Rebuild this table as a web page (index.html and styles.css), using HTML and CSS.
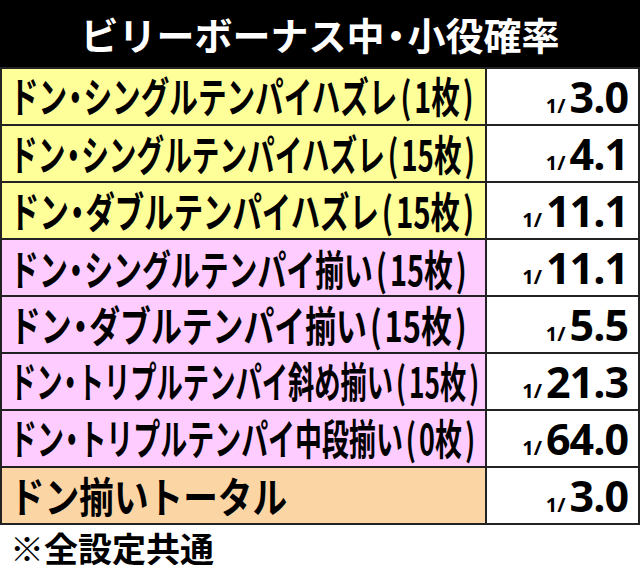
FILE: index.html
```html
<!DOCTYPE html>
<html lang="ja">
<head>
<meta charset="utf-8">
<link rel="stylesheet" href="styles.css">
</head>
<body>
<div class="page">
  <div class="title">ビリーボーナス中<span class="dot">・</span>小役確率</div>
  <table class="odds">
    <colgroup><col class="c-name"><col class="c-val"></colgroup>
    <tr class="yellow"><td class="name"><span class="lbl" style="--sx:.681">ドン<span class="dot">・</span>シングルテンパイハズレ<span class="po">(</span>1枚<span class="pc">)</span></span></td><td class="val"><span class="pre">1/</span><span class="num">3.0</span></td></tr>
    <tr class="yellow"><td class="name"><span class="lbl" style="--sx:.659">ドン<span class="dot">・</span>シングルテンパイハズレ<span class="po">(</span>15枚<span class="pc">)</span></span></td><td class="val"><span class="pre">1/</span><span class="num">4.1</span></td></tr>
    <tr class="yellow"><td class="name"><span class="lbl" style="--sx:.70">ドン<span class="dot">・</span>ダブルテンパイハズレ<span class="po">(</span>15枚<span class="pc">)</span></span></td><td class="val"><span class="pre">1/</span><span class="num">11.1</span></td></tr>
    <tr class="pink"><td class="name"><span class="lbl" style="--sx:.688">ドン<span class="dot">・</span>シングルテンパイ揃い<span class="po">(</span>15枚<span class="pc">)</span></span></td><td class="val"><span class="pre">1/</span><span class="num">11.1</span></td></tr>
    <tr class="pink"><td class="name"><span class="lbl" style="--sx:.735">ドン<span class="dot">・</span>ダブルテンパイ揃い<span class="po">(</span>15枚<span class="pc">)</span></span></td><td class="val"><span class="pre">1/</span><span class="num">5.5</span></td></tr>
    <tr class="pink"><td class="name"><span class="lbl" style="--sx:.626">ドン<span class="dot">・</span>トリプルテンパイ斜め揃い<span class="po">(</span>15枚<span class="pc">)</span></span></td><td class="val"><span class="pre">1/</span><span class="num">21.3</span></td></tr>
    <tr class="pink"><td class="name"><span class="lbl" style="--sx:.642">ドン<span class="dot">・</span>トリプルテンパイ中段揃い<span class="po">(</span>0枚<span class="pc">)</span></span></td><td class="val"><span class="pre">1/</span><span class="num">64.0</span></td></tr>
    <tr class="peach"><td class="name"><span class="lbl" style="--sx:.825">ドン揃いトータル</span></td><td class="val"><span class="pre">1/</span><span class="num">3.0</span></td></tr>
  </table>
  <div class="note">※全設定共通</div>
</div>
</body>
</html>
```

FILE: styles.css
```css
html, body {
  margin: 0;
  padding: 0;
  background: #ffffff;
}

.page {
  width: 640px;
  font-family: "Noto Sans CJK JP", "Noto Sans", sans-serif;
  color: #000;
}

.title {
  background: #000;
  color: #fff;
  height: 67px;
  display: flex;
  align-items: center;
  justify-content: center;
  font-size: 38px;
  font-weight: 700;
  line-height: 1;
}

.dot {
  font-feature-settings: "palt";
}

.title .dot {
  margin: 0 2px;
}

.odds {
  border-collapse: collapse;
  table-layout: fixed;
  width: 640px;
}

.c-name { width: 485px; }

.odds td {
  border: 2px solid #222;
  height: 55px;
  padding: 0;
  white-space: nowrap;
  line-height: 1;
  vertical-align: middle;
}

.yellow .name { background: #ffff99; }
.pink .name { background: #ffccff; }
.peach .name { background: #fcd5a5; }

.odds .name { padding-left: 8px; }

.lbl {
  display: inline-block;
  font-size: calc(42px * var(--sx));
  font-weight: 700;
  line-height: 1;
  transform: scaleY(calc(1 / var(--sx)));
  transform-origin: 50% 50%;
}

.lbl .dot { margin: 0 1px; }
.lbl .po { margin: 0 3px; }
.lbl .pc { margin-left: 3px; }

.odds .val {
  background: #fff;
  text-align: right;
  padding-right: 10px;
  font-family: "Open Sans", "Liberation Sans", sans-serif;
  font-weight: 700;
}

.pre {
  font-size: 20px;
  margin-right: 4px;
}

.num {
  font-size: 43px;
  letter-spacing: -1px;
}

.note {
  font-size: 34px;
  font-weight: 700;
  line-height: 1;
  padding: 6px 0 0 10px;
}
```
